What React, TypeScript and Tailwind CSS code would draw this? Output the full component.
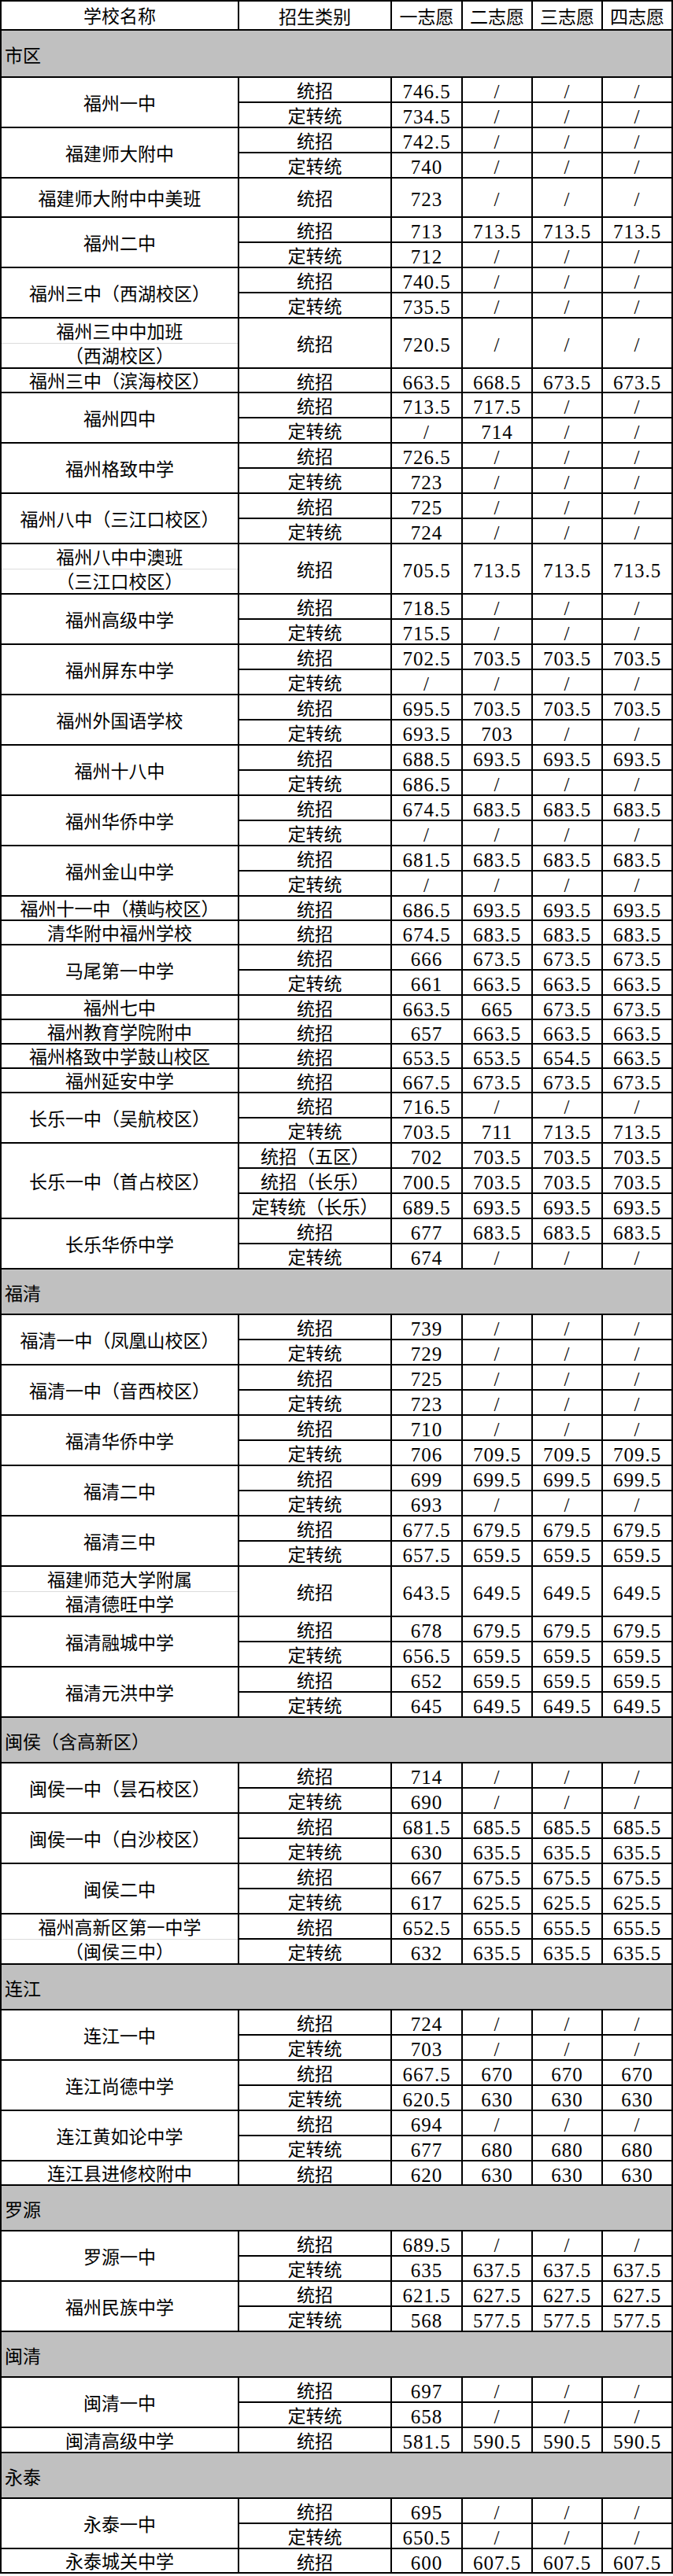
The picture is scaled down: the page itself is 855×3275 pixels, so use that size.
import clsx from "clsx";

type Row = [string, string, string, string, string];
type School = { name: string | [string, string]; rows: Row[]; h?: string };
type Section = { title: string; h: string; schools: School[] };

const S = "/";

// 统招 / 定转统 的快捷写法，缺省的志愿填 "/"
const tz = (a: string, b = S, c = S, d = S): Row => ["统招", a, b, c, d];
const dz = (a: string, b = S, c = S, d = S): Row => ["定转统", a, b, c, d];

const sections: Section[] = [
  {
    title: "市区",
    h: "h-[60px]",
    schools: [
      { name: "福州一中", rows: [tz("746.5"), dz("734.5")] },
      { name: "福建师大附中", rows: [tz("742.5"), dz("740")] },
      { name: "福建师大附中中美班", rows: [tz("723")], h: "h-[50px]" },
      { name: "福州二中", rows: [tz("713", "713.5", "713.5", "713.5"), dz("712")] },
      { name: "福州三中（西湖校区）", rows: [tz("740.5"), dz("735.5")] },
      { name: ["福州三中中加班", "（西湖校区）"], rows: [tz("720.5")], h: "h-[64px]" },
      { name: "福州三中（滨海校区）", rows: [tz("663.5", "668.5", "673.5", "673.5")], h: "h-[31px]" },
      { name: "福州四中", rows: [tz("713.5", "717.5"), dz(S, "714")] },
      { name: "福州格致中学", rows: [tz("726.5"), dz("723")] },
      { name: "福州八中（三江口校区）", rows: [tz("725"), dz("724")] },
      { name: ["福州八中中澳班", "（三江口校区）"], rows: [tz("705.5", "713.5", "713.5", "713.5")], h: "h-[64px]" },
      { name: "福州高级中学", rows: [tz("718.5"), dz("715.5")] },
      { name: "福州屏东中学", rows: [tz("702.5", "703.5", "703.5", "703.5"), dz(S)] },
      { name: "福州外国语学校", rows: [tz("695.5", "703.5", "703.5", "703.5"), dz("693.5", "703")] },
      { name: "福州十八中", rows: [tz("688.5", "693.5", "693.5", "693.5"), dz("686.5")] },
      { name: "福州华侨中学", rows: [tz("674.5", "683.5", "683.5", "683.5"), dz(S)] },
      { name: "福州金山中学", rows: [tz("681.5", "683.5", "683.5", "683.5"), dz(S)] },
      { name: "福州十一中（横屿校区）", rows: [tz("686.5", "693.5", "693.5", "693.5")], h: "h-[31px]" },
      { name: "清华附中福州学校", rows: [tz("674.5", "683.5", "683.5", "683.5")], h: "h-[31px]" },
      { name: "马尾第一中学", rows: [tz("666", "673.5", "673.5", "673.5"), dz("661", "663.5", "663.5", "663.5")] },
      { name: "福州七中", rows: [tz("663.5", "665", "673.5", "673.5")], h: "h-[31px]" },
      { name: "福州教育学院附中", rows: [tz("657", "663.5", "663.5", "663.5")], h: "h-[31px]" },
      { name: "福州格致中学鼓山校区", rows: [tz("653.5", "653.5", "654.5", "663.5")], h: "h-[31px]" },
      { name: "福州延安中学", rows: [tz("667.5", "673.5", "673.5", "673.5")], h: "h-[31px]" },
      { name: "长乐一中（吴航校区）", rows: [tz("716.5"), dz("703.5", "711", "713.5", "713.5")] },
      {
        name: "长乐一中（首占校区）",
        rows: [
          ["统招（五区）", "702", "703.5", "703.5", "703.5"],
          ["统招（长乐）", "700.5", "703.5", "703.5", "703.5"],
          ["定转统（长乐）", "689.5", "693.5", "693.5", "693.5"],
        ],
      },
      { name: "长乐华侨中学", rows: [tz("677", "683.5", "683.5", "683.5"), dz("674")] },
    ],
  },
  {
    title: "福清",
    h: "h-[58px]",
    schools: [
      { name: "福清一中（凤凰山校区）", rows: [tz("739"), dz("729")] },
      { name: "福清一中（音西校区）", rows: [tz("725"), dz("723")] },
      { name: "福清华侨中学", rows: [tz("710"), dz("706", "709.5", "709.5", "709.5")] },
      { name: "福清二中", rows: [tz("699", "699.5", "699.5", "699.5"), dz("693")] },
      { name: "福清三中", rows: [tz("677.5", "679.5", "679.5", "679.5"), dz("657.5", "659.5", "659.5", "659.5")] },
      { name: ["福建师范大学附属", "福清德旺中学"], rows: [tz("643.5", "649.5", "649.5", "649.5")], h: "h-[64px]" },
      { name: "福清融城中学", rows: [tz("678", "679.5", "679.5", "679.5"), dz("656.5", "659.5", "659.5", "659.5")] },
      { name: "福清元洪中学", rows: [tz("652", "659.5", "659.5", "659.5"), dz("645", "649.5", "649.5", "649.5")] },
    ],
  },
  {
    title: "闽侯（含高新区）",
    h: "h-[58px]",
    schools: [
      { name: "闽侯一中（昙石校区）", rows: [tz("714"), dz("690")] },
      { name: "闽侯一中（白沙校区）", rows: [tz("681.5", "685.5", "685.5", "685.5"), dz("630", "635.5", "635.5", "635.5")] },
      { name: "闽侯二中", rows: [tz("667", "675.5", "675.5", "675.5"), dz("617", "625.5", "625.5", "625.5")] },
      {
        name: ["福州高新区第一中学", "（闽侯三中）"],
        rows: [tz("652.5", "655.5", "655.5", "655.5"), dz("632", "635.5", "635.5", "635.5")],
      },
    ],
  },
  {
    title: "连江",
    h: "h-[58px]",
    schools: [
      { name: "连江一中", rows: [tz("724"), dz("703")] },
      { name: "连江尚德中学", rows: [tz("667.5", "670", "670", "670"), dz("620.5", "630", "630", "630")] },
      { name: "连江黄如论中学", rows: [tz("694"), dz("677", "680", "680", "680")] },
      { name: "连江县进修校附中", rows: [tz("620", "630", "630", "630")], h: "h-[31px]" },
    ],
  },
  {
    title: "罗源",
    h: "h-[58px]",
    schools: [
      { name: "罗源一中", rows: [tz("689.5"), dz("635", "637.5", "637.5", "637.5")] },
      { name: "福州民族中学", rows: [tz("621.5", "627.5", "627.5", "627.5"), dz("568", "577.5", "577.5", "577.5")] },
    ],
  },
  {
    title: "闽清",
    h: "h-[58px]",
    schools: [
      { name: "闽清一中", rows: [tz("697"), dz("658")] },
      { name: "闽清高级中学", rows: [tz("581.5", "590.5", "590.5", "590.5")] },
    ],
  },
  {
    title: "永泰",
    h: "h-[58px]",
    schools: [
      { name: "永泰一中", rows: [tz("695"), dz("650.5")] },
      { name: "永泰城关中学", rows: [tz("600", "607.5", "607.5", "607.5")], h: "h-[31px]" },
    ],
  },
];

// 四个志愿列的宽度，最后一列吃掉剩余宽度
const valCols = [
  "w-[90px] border-r-2 border-black",
  "w-[89px] border-r-2 border-black",
  "w-[89px] border-r-2 border-black",
  "flex-1",
];

function Cells({ row, head }: { row: Row; head?: boolean }) {
  return (
    <>
      <div className="w-[194px] shrink-0 border-r-2 border-black flex items-center justify-center pt-[5px] whitespace-nowrap">
        {row[0]}
      </div>
      {row.slice(1).map((v, i) => (
        <div
          key={i}
          className={clsx(
            "flex items-center justify-center pt-[5px] whitespace-nowrap",
            !head && "text-[25px] tracking-[1px]",
            valCols[i]
          )}
        >
          {v}
        </div>
      ))}
    </>
  );
}

function SchoolBlock({ s }: { s: School }) {
  const lines = typeof s.name === "string" ? [s.name] : s.name;
  return (
    <div className="flex">
      <div className="w-[302px] shrink-0 border-r-2 border-b-2 border-black flex flex-col">
        {lines.map((l, i) => (
          <div
            key={i}
            className={clsx(
              "flex-1 flex items-center justify-center pt-[4px] whitespace-nowrap",
              i > 0 && "border-t border-[#dcdcdc]"
            )}
          >
            {l}
          </div>
        ))}
      </div>
      <div className="flex-1 flex flex-col">
        {s.rows.map((r, i) => (
          <div key={i} className={clsx("flex border-b-2 border-black", s.h ?? "h-[32px]")}>
            <Cells row={r} />
          </div>
        ))}
      </div>
    </div>
  );
}

export default function App() {
  return (
    <div className="w-[855px] bg-white text-black text-[23px] leading-none font-['Liberation_Serif','Noto_Sans_CJK_SC',serif]">
      <div className="border-l-2 border-r-2 border-t-2 border-black">
        {/* 表头 */}
        <div className="flex h-[37px] border-b-2 border-black">
          <div className="w-[302px] shrink-0 border-r-2 border-black flex items-center justify-center pt-[4px]">
            学校名称
          </div>
          <Cells head row={["招生类别", "一志愿", "二志愿", "三志愿", "四志愿"]} />
        </div>

        {sections.map((sec) => (
          <div key={sec.title}>
            <div className={clsx("bg-[#c0c0c0] border-b-2 border-black flex items-center pl-[4px] pt-[6px]", sec.h)}>
              {sec.title}
            </div>
            {sec.schools.map((s, i) => (
              <SchoolBlock key={i} s={s} />
            ))}
          </div>
        ))}
      </div>
    </div>
  );
}
